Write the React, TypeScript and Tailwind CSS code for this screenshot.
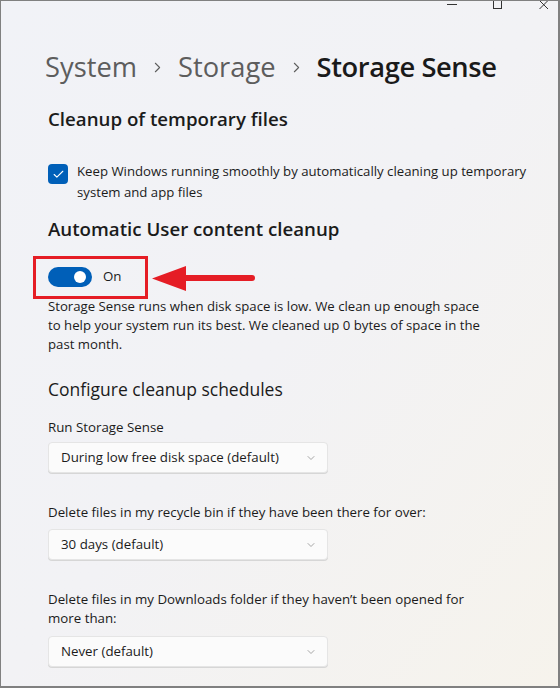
import { ChevronRight, ChevronDown, Check } from "lucide-react";

const font = { fontFamily: '"Open Sans", "Noto Sans", sans-serif' };

function Dropdown({ value }: { value: string }) {
  return (
    <div className="flex h-[31px] w-[280px] items-center justify-between rounded-[4px] border border-[#e5e5e5] bg-[#fbfbfb] pl-[12px] pr-[10px] text-[13.3px] text-[#1b1b1b] shadow-[0_1px_0_#d6d6d6]">
      <span>{value}</span>
      <ChevronDown className="h-[12px] w-[12px] text-[#8a8a8a]" strokeWidth={1.5} />
    </div>
  );
}

export default function App() {
  return (
    <div
      style={font}
      className="relative flex h-[688px] w-[560px] flex-col overflow-hidden border border-b-2 border-r-2 border-[#808080] bg-linear-to-br from-[#f1f2f7] via-[#f2f2f5] to-[#f6f3ec] text-[#1b1b1b]"
    >
      <div className="flex h-[8px] justify-end gap-[36px] pr-[9px]">
        <svg width="10" height="10" viewBox="0 0 10 10" className="-mt-[2px]">
          <path d="M0 5.5h10" stroke="#333" strokeWidth="1" />
        </svg>
        <svg width="10" height="10" viewBox="0 0 10 10" className="-mt-[2px]">
          <rect x="0.5" y="0.5" width="8" height="9" fill="none" stroke="#333" strokeWidth="1" />
        </svg>
        <svg width="10" height="10" viewBox="0 0 10 10" className="-mt-[1px]">
          <path d="M0.5 0.5l8.5 8.5M9 0.5L0.5 9" stroke="#333" strokeWidth="1" />
        </svg>
      </div>

      <div className="mt-[40px] flex items-center pl-[44px] text-[27.3px] leading-[36px]">
        <span className="text-[#5d5d5d]">System</span>
        <ChevronRight className="mx-[12px] h-[17px] w-[17px] text-[#5d5d5d]" strokeWidth={1.5} />
        <span className="text-[#5d5d5d]">Storage</span>
        <ChevronRight className="mx-[12px] h-[17px] w-[17px] text-[#5d5d5d]" strokeWidth={1.5} />
        <span className="font-semibold tracking-[-0.4px] text-[#1a1a1a]">Storage Sense</span>
      </div>

      <div className="flex flex-col pl-[47px]">
        <h2 className="mt-[21px] text-[18.7px] font-semibold leading-[26px]">Cleanup of temporary files</h2>

        <div className="mt-[29px] flex gap-[9px]">
          <div className="mt-[3px] flex h-[20px] w-[20px] shrink-0 items-center justify-center rounded-[4px] bg-[#005fb8]">
            <Check className="h-[13px] w-[13px] text-white" strokeWidth={2} />
          </div>
          <p className="text-[13.2px] leading-[21px]">
            Keep Windows running smoothly by automatically cleaning up temporary
            <br />
            system and app files
          </p>
        </div>

        <h2 className="mt-[13px] text-[18.7px] font-semibold leading-[26px]">Automatic User content cleanup</h2>

        <div className="relative mt-[25px] flex h-[20px] items-center gap-[11px]">
          <div className="flex h-[20px] w-[44px] items-center justify-end rounded-full bg-[#005fb8] pr-[6px]">
            <div className="h-[12px] w-[12px] rounded-full bg-white" />
          </div>
          <span className="text-[13.3px]">On</span>
          <div className="absolute -left-[15px] -top-[11px] h-[43px] w-[115px] border-[3px] border-[#e51d25]" />
          <svg className="absolute left-[104px] -top-[1px]" width="103" height="26" viewBox="0 0 103 26">
            <path d="M0 12.5L34 0V9H100a3 3 0 0 1 0 6H34V25Z" fill="#e51d25" />
          </svg>
        </div>

        <p className="mt-[10px] text-[13.2px] leading-[19px]">
          Storage Sense runs when disk space is low. We clean up enough space
          <br />
          to help your system run its best. We cleaned up 0 bytes of space in the
          <br />
          past month.
        </p>

        <h3 className="mt-[22px] text-[17.5px] leading-[26px]">Configure cleanup schedules</h3>

        <div className="mt-[15px] text-[13.3px] leading-[20px]">Run Storage Sense</div>
        <div className="mt-[5px]">
          <Dropdown value="During low free disk space (default)" />
        </div>

        <div className="mt-[29px] text-[13.3px] leading-[20px]">
          Delete files in my recycle bin if they have been there for over:
        </div>
        <div className="mt-[7px]">
          <Dropdown value="30 days (default)" />
        </div>

        <div className="mt-[30px] text-[13.3px] leading-[19px]">
          Delete files in my Downloads folder if they haven’t been opened for
          <br />
          more than:
        </div>
        <div className="mt-[8px]">
          <Dropdown value="Never (default)" />
        </div>
      </div>
    </div>
  );
}
